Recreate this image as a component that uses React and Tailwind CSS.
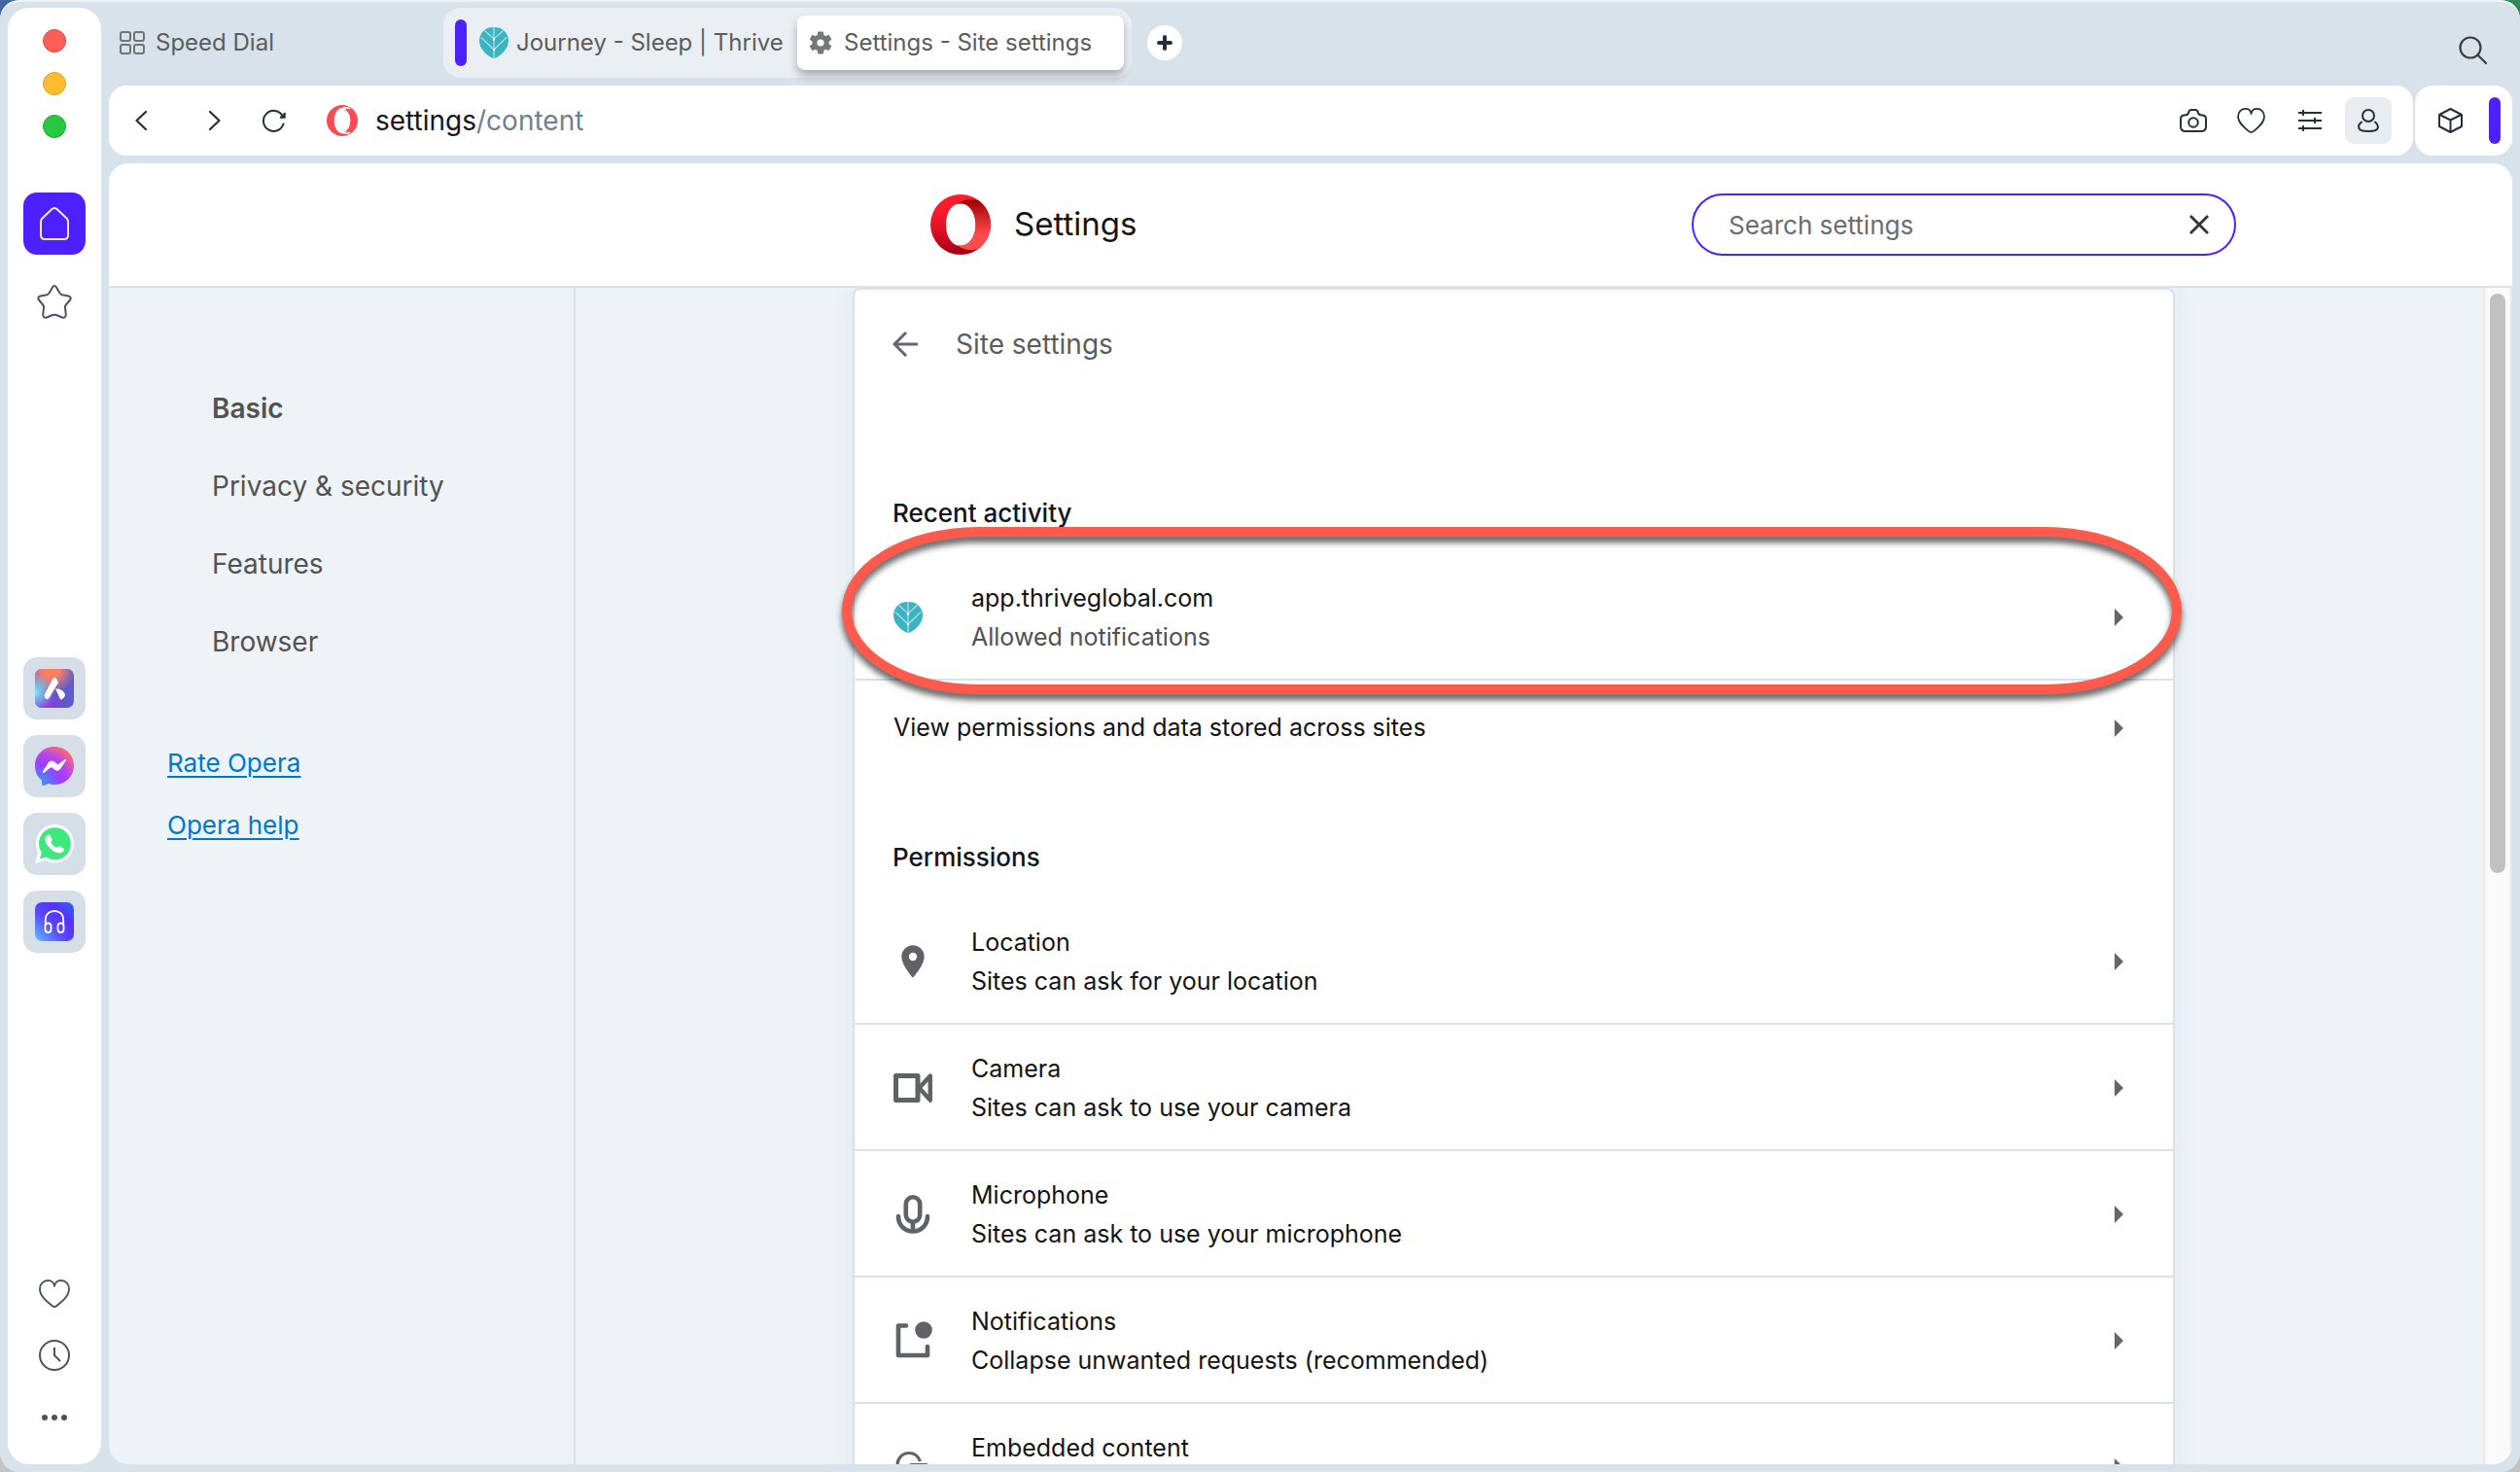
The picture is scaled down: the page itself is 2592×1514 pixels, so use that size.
import React, { useState } from 'react';

const navItems = ['Basic', 'Privacy & security', 'Features', 'Browser'];

function LeafIcon() {
  return (
    <svg width="30" height="32" viewBox="0 0 30 32" className="shrink-0">
      <path
        d="M15 0C20 0 23 1 25.5 3.5C28.5 6.5 30 10 30 14C30 21 24 28 17 31.5Q15 32.4 13 31.5C6 28 0 21 0 14C0 10 1.5 6.5 4.5 3.5C7 1 10 0 15 0Z"
        fill="#3bb3c1"
      />
      <path d="M15 0V32M5.5 3.5L15 12L24.5 3.5M2 10.5L15 23L28 10.5" stroke="#a9e0e6" strokeWidth="1.3" fill="none" />
      <circle cx="15" cy="12.5" r="1.2" fill="#fff" />
      <circle cx="15" cy="23" r="1.2" fill="#fff" />
    </svg>
  );
}

function OperaIcon() {
  return (
    <svg width="32" height="32" viewBox="0 0 32 32" className="shrink-0">
      <circle cx="16" cy="16" r="16" fill="#fa4b4f" />
      <ellipse cx="16" cy="16" rx="8.4" ry="13" fill="#fff" />
      <path d="M17 5.4C23 4 27 9 27 16S23 28 17 26.6C21.5 27 25 22 25 16S21.5 5 17 5.4Z" fill="#fa4b4f" />
      <path d="M15 3.8Q19 1.8 24 3.6M15 28.2Q19 30.2 24 28.4" stroke="#fff" strokeWidth="1.3" fill="none" />
    </svg>
  );
}

function OperaLogo() {
  return (
    <svg width="62" height="62" viewBox="0 0 62 62" className="shrink-0">
      <defs>
        <linearGradient id="operaRing" x1="0" y1="0" x2="0" y2="1">
          <stop offset="0.2" stopColor="#ff1b2d" />
          <stop offset="0.6" stopColor="#dd1025" />
          <stop offset="1" stopColor="#a00013" />
        </linearGradient>
        <linearGradient id="operaCrescent" x1="0" y1="0" x2="0" y2="1">
          <stop offset="0" stopColor="#9c0000" />
          <stop offset="0.7" stopColor="#ff4b4b" />
          <stop offset="1" stopColor="#ff4b4b" />
        </linearGradient>
      </defs>
      <path
        fillRule="evenodd"
        fill="url(#operaRing)"
        d="M31 0A31 31 0 0 1 31 62A31 31 0 0 1 31 0ZM31 9.2C22 9.2 16 18 16 31S22 52.8 31 52.8S46.5 43 46.5 31S40 9.2 31 9.2Z"
      />
      <path
        fill="url(#operaCrescent)"
        d="M28 9.8C34 4.5 43 3.5 50.5 6.8A31 31 0 0 1 50.5 55.2C43 58.5 34 57.5 28 52.2C40 54.5 46.5 43 46.5 31S40 7.5 28 9.8Z"
      />
    </svg>
  );
}

function HeartIcon({ width, height }) {
  return (
    <svg width={width} height={height} viewBox="0 0 32 29" fill="none" stroke="currentColor" strokeWidth="1.9" strokeLinejoin="round" strokeLinecap="round">
      <path d="M16 6.8C15.5 3 12.5 1 9.5 1C4.5 1 1 4.5 1 10C1 17 8 22.5 13.5 27Q16 29 18.5 27C24 22.5 31 17 31 10C31 4.5 27.5 1 22.5 1C19.5 1 16.5 3 16 6.8Z" />
    </svg>
  );
}

function AriaIcon() {
  return (
    <svg width="40" height="40" viewBox="0 0 40 40">
      <defs>
        <radialGradient id="ariaTop" cx="0.4" cy="0" r="0.65">
          <stop offset="0" stopColor="#ff8048" />
          <stop offset="0.35" stopColor="#f5806a" />
          <stop offset="1" stopColor="#f5806a" stopOpacity="0" />
        </radialGradient>
        <radialGradient id="ariaLeft" cx="0" cy="0.6" r="0.5">
          <stop offset="0" stopColor="#7fe9f5" />
          <stop offset="1" stopColor="#7fe9f5" stopOpacity="0" />
        </radialGradient>
        <radialGradient id="ariaBottom" cx="0.3" cy="1" r="0.6">
          <stop offset="0" stopColor="#9a35f0" />
          <stop offset="1" stopColor="#7a3fd0" stopOpacity="0" />
        </radialGradient>
      </defs>
      <rect width="40" height="40" rx="7" fill="#5e5ccb" />
      <rect width="40" height="40" rx="7" fill="url(#ariaTop)" />
      <rect width="40" height="40" rx="7" fill="url(#ariaBottom)" />
      <rect width="40" height="40" rx="7" fill="url(#ariaLeft)" />
      <path d="M9.5 27L18.5 9.8Q21 7.5 22.5 11L24 14L14.5 30Q12 32.5 10 29.5Z" fill="#fff" />
      <path d="M21 20.5C26 20 30 22.5 31 27Q31 28.5 27.5 31.5Q26.5 32 25.5 30Z" fill="#fff" />
    </svg>
  );
}

function MessengerIcon() {
  return (
    <svg width="40" height="40" viewBox="0 0 40 40">
      <defs>
        <radialGradient id="messenger" cx="0.1" cy="1" r="1.15">
          <stop offset="0" stopColor="#1fa8ff" />
          <stop offset="0.5" stopColor="#a03dff" />
          <stop offset="0.7" stopColor="#b445f0" />
          <stop offset="1" stopColor="#ff6a70" />
        </radialGradient>
      </defs>
      <path
        d="M20 0C31.5 0 40 8.5 40 19.5S31.5 39 20 39Q17 39 14 38L9 40Q7 40.3 7 38.5L6.8 34.5C2.5 31 0 26 0 19.5C0 8.5 8.5 0 20 0Z"
        fill="url(#messenger)"
      />
      <path d="M8 25.5L14 16Q16.5 13.3 19.5 15.3L22.5 17.8Q23.5 18.4 24.5 17.7L31 13Q32.5 12.5 32 14L26 23Q23.5 26 20.5 24L17.5 21.6Q16.5 21 15.5 21.7L9 27Q7.5 27.2 8 25.5Z" fill="#fff" />
    </svg>
  );
}

function WhatsappIcon() {
  return (
    <svg width="40" height="40" viewBox="0 0 40 40">
      <path d="M20.5 0C31.5 0 40 8.5 40 19.5S31.5 39.5 20.5 39.5Q15 39.5 11 37L0 40L3 29.5Q1 25 1 19.5C1 8.5 9.5 0 20.5 0Z" fill="#fff" />
      <path d="M20.5 3.2C30 3.2 36.8 10.5 36.8 19.7S30 36.2 20.5 36.2Q15.5 36.2 11.5 33.5L5 35.2L6.8 29Q4 25 4 19.7C4 10.5 11 3.2 20.5 3.2Z" fill="#3fe87f" />
      <path d="M12.5 11C14 10 15.5 10.5 16 12L17.5 15.5Q17.8 16.6 16.3 18.2Q17.5 21.5 22 24Q24 22 25 22.3L29 24.2C30.5 25 30 27 28 28.5C25 30.5 20 29 15.5 24.5C11 20 8.5 14.5 12.5 11Z" fill="#fff" />
    </svg>
  );
}

function PlayerIcon() {
  return (
    <svg width="40" height="40" viewBox="0 0 40 40">
      <defs>
        <linearGradient id="player" x1="0" y1="1" x2="1" y2="0">
          <stop offset="0" stopColor="#5cc4ff" />
          <stop offset="0.4" stopColor="#5b48ff" />
          <stop offset="0.7" stopColor="#5630ff" />
          <stop offset="1" stopColor="#2a6bff" />
        </linearGradient>
      </defs>
      <rect width="40" height="40" rx="7" fill="url(#player)" />
      <g fill="none" stroke="#fff" strokeWidth="1.8">
        <path d="M10.8 24V18.5C10.8 12.5 14.5 9 20 9S29.2 12.5 29.2 18.5V24" />
        <rect x="10.5" y="21.5" width="6" height="9.5" rx="3" />
        <rect x="23.5" y="21.5" width="6" height="9.5" rx="3" />
      </g>
    </svg>
  );
}

function LocationIcon() {
  return (
    <svg width="40" height="40" viewBox="0 0 24 24" fill="#5f6368">
      <path d="M12 2C8.13 2 5 5.13 5 9c0 5.25 7 13 7 13s7-7.75 7-13c0-3.87-3.13-7-7-7zm0 9.5a2.5 2.5 0 0 1 0-5 2.5 2.5 0 0 1 0 5z" />
    </svg>
  );
}

function CameraIcon() {
  return (
    <svg width="40" height="40" viewBox="0 0 40 40" fill="none" stroke="#5f6368" strokeWidth="5" strokeLinejoin="round">
      <rect x="2.5" y="7.5" width="22.5" height="25" />
      <path d="M37.8 7.5L26.5 20L37.8 32.5Z" strokeWidth="4.5" />
    </svg>
  );
}

function MicIcon() {
  return (
    <svg width="40" height="40" viewBox="0 0 40 40" fill="none" stroke="#5f6368" strokeWidth="4.6" strokeLinecap="round">
      <rect x="12.8" y="2.3" width="14.4" height="25.4" rx="7.2" />
      <path d="M5 22C5 31 11.5 37.5 20 37.5S35 31 35 22" />
      <path d="M20 29V37" strokeLinecap="butt" />
    </svg>
  );
}

function NotificationIcon() {
  return (
    <svg width="40" height="40" viewBox="0 0 40 40">
      <path d="M13 4.5H5V35H35V26" fill="none" stroke="#5f6368" strokeWidth="4.6" strokeLinecap="round" strokeLinejoin="round" />
      <circle cx="31" cy="9" r="8.8" fill="#5f6368" />
    </svg>
  );
}

function EmbeddedIcon() {
  return (
    <svg width="40" height="40" viewBox="0 0 40 40" fill="none" stroke="#5f6368" strokeWidth="3.2">
      <path d="M27.5 14C25.5 8.5 21 5.5 16 5.5C9 5.5 4 11 4 18C4 25 9 30.5 14 30.5" />
      <rect x="17" y="17.5" width="18" height="15" rx="2" />
    </svg>
  );
}

const permissions = [
  { title: 'Location', detail: 'Sites can ask for your location', icon: LocationIcon },
  { title: 'Camera', detail: 'Sites can ask to use your camera', icon: CameraIcon },
  { title: 'Microphone', detail: 'Sites can ask to use your microphone', icon: MicIcon },
  { title: 'Notifications', detail: 'Collapse unwanted requests (recommended)', icon: NotificationIcon },
  { title: 'Embedded content', icon: EmbeddedIcon },
];

function Arrow() {
  return (
    <svg width="9" height="18" viewBox="0 0 9 18" className="ml-auto shrink-0">
      <path d="M0 0L9 9L0 18Z" fill="#65656f" />
    </svg>
  );
}

function SettingRow({ title, detail, icon: Icon, muted }) {
  return (
    <button type="button" className="flex w-full items-center gap-10 border-b-2 border-[#d8e2ea] pb-[23px] pl-10 pr-[51px] pt-[25px] text-left text-[25px] leading-10">
      <span className="flex w-10 shrink-0 items-center">
        <Icon />
      </span>
      <span className="flex min-h-20 flex-col">
        <span>{title}</span>
        {detail && <span className={muted ? 'text-[#515151]' : ''}>{detail}</span>}
      </span>
      <Arrow />
    </button>
  );
}

function Sidebar() {
  return (
    <aside className="flex w-24 shrink-0 flex-col items-center rounded-[22px] bg-white pb-4 pt-[22px] text-[#4b545e]">
      <div className="flex flex-col gap-5">
        <button type="button" aria-label="Close window" className="size-6 rounded-full border border-[#e2463f] bg-[#ff5f57]" />
        <button type="button" aria-label="Minimize window" className="size-6 rounded-full border border-[#dfa023] bg-[#febc2e]" />
        <button type="button" aria-label="Zoom window" className="size-6 rounded-full border border-[#1dad2b] bg-[#28c840]" />
      </div>
      <div className="mt-14 flex flex-col gap-4">
        <button type="button" aria-label="Home" className="flex size-16 items-center justify-center rounded-[14px] bg-[#4e1fff]">
          <svg width="30" height="34" viewBox="0 0 30 34" fill="none" stroke="#f0ecff" strokeWidth="2" strokeLinejoin="round">
            <path d="M12.5 2Q15 0 17.5 2L27.5 11.5Q29 13 29 15V29Q29 33 25 33H5Q1 33 1 29V15Q1 13 2.5 11.5Z" />
          </svg>
        </button>
        <button type="button" aria-label="Pinboards" className="flex size-16 items-center justify-center">
          <svg width="36" height="35" viewBox="0 0 36 35" fill="none" stroke="currentColor" strokeWidth="2" strokeLinejoin="round">
            <path d="M16 2.5Q18 -0.5 20 2.5L23.5 8.5Q24.3 9.8 26 10.2L32.5 11.5Q36 12.8 34 15.5L29.5 21Q28.8 22 29 23.5L29.8 30.5Q29.5 34.5 26 33.5L20 31Q18 30.3 16 31L10 33.5Q6.5 34.5 6.2 30.5L7 23.5Q7.2 22 6.5 21L2 15.5Q0 12.8 3.5 11.5L10 10.2Q11.7 9.8 12.5 8.5Z" />
          </svg>
        </button>
      </div>
      <div className="mt-[334px] flex flex-col gap-4">
        <button type="button" aria-label="Aria" className="flex size-16 items-center justify-center rounded-[14px] bg-[#d6dee8]"><AriaIcon /></button>
        <button type="button" aria-label="Messenger" className="flex size-16 items-center justify-center rounded-[14px] bg-[#d6dee8]"><MessengerIcon /></button>
        <button type="button" aria-label="WhatsApp" className="flex size-16 items-center justify-center rounded-[14px] bg-[#d6dee8]"><WhatsappIcon /></button>
        <button type="button" aria-label="Player" className="flex size-16 items-center justify-center rounded-[14px] bg-[#d6dee8]"><PlayerIcon /></button>
      </div>
      <div className="mt-auto flex flex-col">
        <button type="button" aria-label="Favorites" className="flex size-16 items-center justify-center">
          <HeartIcon width="32" height="29" />
        </button>
        <button type="button" aria-label="History" className="flex size-16 items-center justify-center">
          <svg width="32" height="32" viewBox="0 0 32 32" fill="none" stroke="currentColor" strokeWidth="2">
            <circle cx="16" cy="16" r="15" />
            <path d="M16 8V16L22 22" />
          </svg>
        </button>
        <button type="button" aria-label="More" className="flex size-16 items-center justify-center">
          <svg width="26" height="6" viewBox="0 0 26 6" fill="currentColor">
            <circle cx="3" cy="3" r="3" />
            <circle cx="13" cy="3" r="3" />
            <circle cx="23" cy="3" r="3" />
          </svg>
        </button>
      </div>
    </aside>
  );
}

function TabBar() {
  return (
    <div className="flex h-[72px] shrink-0 items-center text-[24px] text-[#5c5c5c]">
      <button type="button" className="flex w-[344px] items-center gap-[11px] pl-[11px]">
        <svg width="26" height="24" viewBox="0 0 26 24" fill="none" stroke="#737373" strokeWidth="2">
          <rect x="1" y="1" width="10" height="9" rx="2" />
          <rect x="15" y="1" width="10" height="9" rx="2" />
          <rect x="1" y="14" width="10" height="9" rx="2" />
          <rect x="15" y="14" width="10" height="9" rx="2" />
        </svg>
        Speed Dial
      </button>
      <div className="flex h-full items-center rounded-[18px] bg-[#eaeff4] px-2">
        <span className="ml-1 h-12 w-3 rounded-full bg-[#4e1fff]" />
        <button type="button" className="flex w-[340px] items-center gap-2 whitespace-nowrap pl-[13px]">
          <LeafIcon />
          Journey - Sleep | Thrive
        </button>
        <button type="button" className="flex h-14 w-[336px] items-center gap-3 whitespace-nowrap rounded-lg bg-white pl-3 shadow-[0_6px_10px_rgba(0,0,0,0.28)]">
          <svg width="24" height="24" viewBox="2.25 2 19.5 20" fill="#757876">
            <path d="M19.14 12.94c.04-.3.06-.61.06-.94 0-.32-.02-.64-.07-.94l2.03-1.58c.18-.14.23-.41.12-.61l-1.92-3.32c-.12-.22-.37-.29-.59-.22l-2.39.96c-.5-.38-1.03-.7-1.62-.94l-.36-2.54c-.04-.24-.24-.41-.48-.41h-3.84c-.24 0-.43.17-.47.41l-.36 2.54c-.59.24-1.13.57-1.62.94l-2.39-.96c-.22-.08-.47 0-.59.22L2.74 8.87c-.12.21-.08.47.12.61l2.03 1.58c-.05.3-.09.63-.09.94s.02.64.07.94l-2.03 1.58c-.18.14-.23.41-.12.61l1.92 3.32c.12.22.37.29.59.22l2.39-.96c.5.38 1.03.7 1.62.94l.36 2.54c.05.24.24.41.48.41h3.84c.24 0 .44-.17.47-.41l.36-2.54c.59-.24 1.13-.56 1.62-.94l2.39.96c.22.08.47 0 .59-.22l1.92-3.32c.12-.22.07-.47-.12-.61l-2.01-1.58zM12 15a3 3 0 1 1 0-6 3 3 0 0 1 0 6z" />
          </svg>
          Settings - Site settings
        </button>
      </div>
      <button type="button" aria-label="New tab" className="ml-4 flex size-9 items-center justify-center rounded-full bg-white">
        <svg width="16" height="16" viewBox="0 0 16 16" stroke="#25303b" strokeWidth="4" strokeLinecap="round">
          <path d="M8 2V14M2 8H14" />
        </svg>
      </button>
      <button type="button" aria-label="Search tabs" className="ml-auto mr-[25px] mt-4">
        <svg width="30" height="30" viewBox="0 0 30 30" fill="none" stroke="#3c3c3c" strokeWidth="2.2" strokeLinecap="round">
          <circle cx="12" cy="12" r="10.5" />
          <path d="M19.5 19.5L28 28" />
        </svg>
      </button>
    </div>
  );
}

function AddressBar() {
  return (
    <div className="flex h-[72px] shrink-0 gap-[2px] text-[#25303b]">
      <div className="flex flex-1 items-center rounded-[18px] bg-white pl-[26px] pr-[22px]">
        <button type="button" aria-label="Back">
          <svg width="14" height="22" viewBox="0 0 14 22" fill="none" stroke="currentColor" strokeWidth="2.2" strokeLinecap="round" strokeLinejoin="round">
            <path d="M12 2L2.5 11L12 20" />
          </svg>
        </button>
        <button type="button" aria-label="Forward" className="ml-[62px]">
          <svg width="14" height="22" viewBox="0 0 14 22" fill="none" stroke="currentColor" strokeWidth="2.2" strokeLinecap="round" strokeLinejoin="round">
            <path d="M2 2L11.5 11L2 20" />
          </svg>
        </button>
        <button type="button" aria-label="Reload" className="ml-[42px]">
          <svg width="24" height="24" viewBox="0 0 24 24" fill="none" stroke="currentColor" strokeWidth="2">
            <path d="M21.5 15.5A10.5 10.5 0 1 1 20.5 7" strokeLinecap="round" />
            <path d="M23.5 3.5V9.5H17.5Z" fill="currentColor" stroke="none" />
            <path d="M18 8.5H22.5V4" />
          </svg>
        </button>
        <span className="ml-[42px] flex items-center gap-[18px] text-[28px] text-[#14171c]">
          <OperaIcon />
          <span>settings<span className="text-[#6f8091]">/content</span></span>
        </span>
        <div className="ml-auto flex items-center">
          <button type="button" aria-label="Snapshot">
            <svg width="28" height="24" viewBox="0 0 28 24" fill="none" stroke="currentColor" strokeWidth="2">
              <path d="M5 6.5Q8.5 6.5 9 4Q9.5 1 12 1H16Q18.5 1 19 4Q19.5 6.5 23 6.5Q27 6.5 27 10.5V18Q27 23 22 23H6Q1 23 1 18V10.5Q1 6.5 5 6.5Z" />
              <circle cx="14" cy="14" r="4.8" />
            </svg>
          </button>
          <button type="button" aria-label="Bookmark" className="ml-[31px]">
            <HeartIcon width="29" height="26" />
          </button>
          <button type="button" aria-label="Easy setup" className="ml-[34px]">
            <svg width="24" height="22" viewBox="0 0 24 22" fill="none" stroke="currentColor" strokeWidth="2">
              <path d="M0 3H24M0 11H24M0 19H24M5 0V6M17 8V14M5 16V22" />
            </svg>
          </button>
          <button type="button" aria-label="Account" className="ml-6 flex size-12 items-center justify-center rounded-[9px] bg-[#e8edf1]">
            <svg width="22" height="24" viewBox="0 0 22 24" fill="none" stroke="currentColor" strokeWidth="2" strokeLinecap="round">
              <circle cx="11" cy="7" r="6" />
              <path d="M4 13.5C2 15 1 17 1 18.5C1 22 5 23 11 23S21 22 21 18.5C21 17 20 15 18 13.5" />
            </svg>
          </button>
        </div>
      </div>
      <div className="flex items-center gap-[27px] rounded-[18px] bg-white pl-6 pr-3">
        <button type="button" aria-label="Extensions">
          <svg width="25" height="26" viewBox="0 0 25 26" fill="none" stroke="currentColor" strokeWidth="2" strokeLinejoin="round">
            <path d="M12.5 1L24 7V19L12.5 25L1 19V7ZM1.5 7L12.5 12.5L23.5 7M12.5 12.5V25" />
          </svg>
        </button>
        <span className="h-12 w-3 rounded-full bg-[#4e1fff]" />
      </div>
    </div>
  );
}

function App() {
  const [query, setQuery] = useState('');

  return (
    <div className="h-screen overflow-hidden bg-[linear-gradient(transparent_50%,#c4c4c4_50%),linear-gradient(90deg,#4268a8_50%,#2e8b57_50%)] font-[Inter,sans-serif] text-[#141414]">
      <div className="flex h-full gap-2 rounded-[20px] bg-[#d8e2ea] p-2 shadow-[inset_0_2px_0_#eef2f5]">
        <Sidebar />
        <div className="flex min-w-0 flex-1 flex-col gap-2">
          <TabBar />
          <AddressBar />
          <div className="flex min-h-0 flex-1 flex-col overflow-hidden rounded-[20px] bg-[#edf3f7]">
            <header className="flex h-32 shrink-0 items-center justify-center border-b-2 border-[#d8e2ea] bg-white pl-[561px]">
              <div className="flex w-[1343px] items-center">
                <OperaLogo />
                <h1 className="ml-6 text-[33px]">Settings</h1>
                <div className="ml-auto flex h-16 w-[560px] items-center rounded-full border-2 border-[#4e1fff] bg-white pl-9 pr-[26px]">
                  <input
                    type="text"
                    aria-label="Search settings"
                    placeholder="Search settings"
                    value={query}
                    onChange={(e) => setQuery(e.target.value)}
                    className="min-w-0 flex-1 text-[26px] outline-none placeholder:text-[#6b6b76]"
                  />
                  <button type="button" aria-label="Clear search" onClick={() => setQuery('')}>
                    <svg width="20" height="20" viewBox="0 0 20 20" stroke="#333" strokeWidth="2.8">
                      <path d="M1 1L19 19M19 1L1 19" />
                    </svg>
                  </button>
                </div>
              </div>
            </header>
            <div className="flex min-h-0 flex-1">
              <nav className="w-[480px] shrink-0 border-r-2 border-[#d8e2ea] pt-[84px]">
                <ul className="text-[28px] text-[#525252]">
                  {navItems.map((item, i) => (
                    <li key={item} className="flex h-20 items-center pl-[106px]">
                      <a href="#" className={i === 0 ? 'font-semibold' : ''}>{item}</a>
                    </li>
                  ))}
                </ul>
                <div className="mt-[53px] flex flex-col items-start pl-[60px] text-[26px] leading-[64px] text-[#0077cc] underline decoration-2 underline-offset-4">
                  <a href="#">Rate Opera</a>
                  <a href="#">Opera help</a>
                </div>
              </nav>
              <main className="flex min-w-0 flex-1 justify-center overflow-hidden pr-8">
                <div className="h-max w-[1360px] rounded-lg border-2 border-[#d8e2ea] bg-white shadow-[0_0_30px_rgba(60,90,120,0.06)]">
                  <div className="flex h-28 items-center gap-[39px] pl-[39px]">
                    <button type="button" aria-label="Go back">
                      <svg width="26" height="26" viewBox="0 0 26 26" fill="none" stroke="#666673" strokeWidth="3">
                        <path d="M26 13H3M14 1L2 13L14 25" />
                      </svg>
                    </button>
                    <h2 className="text-[28px] text-[#5c5c5c]">Site settings</h2>
                  </div>
                  <h3 className="mt-[74px] flex h-[86px] items-center pl-[39px] text-[26px] font-medium">Recent activity</h3>
                  <div className="relative">
                    <SettingRow title="app.thriveglobal.com" detail="Allowed notifications" icon={LeafIcon} muted />
                    <div className="pointer-events-none absolute -bottom-[14px] -left-[13px] -right-[9px] -top-7 rounded-[140px/86px] border-[10px] border-[#ff5a4c] drop-shadow-[0_6px_3px_rgba(0,0,0,0.6)]" />
                  </div>
                  <button type="button" className="flex h-24 w-full items-center pl-10 pr-[51px] pt-0.5 text-left text-[25px]">
                    View permissions and data stored across sites
                    <Arrow />
                  </button>
                  <h3 className="mt-[42px] flex h-[86px] items-center pl-[39px] text-[26px] font-medium">Permissions</h3>
                  {permissions.map((p) => (
                    <SettingRow key={p.title} title={p.title} detail={p.detail} icon={p.icon} />
                  ))}
                </div>
              </main>
              <div className="w-[30px] shrink-0 border-x-2 border-[#e8e8e8] bg-[#fafafa] px-[5px] pt-1.5">
                <div className="h-[596px] rounded-full bg-[#c1c1c1]" />
              </div>
            </div>
          </div>
        </div>
      </div>
    </div>
  );
}

export default App;
